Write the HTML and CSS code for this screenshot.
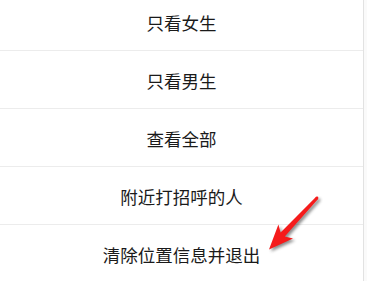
FILE: index.html
```
<!DOCTYPE html>
<html>
<head>
    <meta charset="UTF-8">
    <meta name="viewport" content="width=device-width, initial-scale=1.0">
    <link rel="stylesheet" href="styles.css">
</head>
<body>
    <div class="sheet">
        <ul class="menu">
            <li class="menu-item">只看女生</li>
            <li class="menu-item">只看男生</li>
            <li class="menu-item">查看全部</li>
            <li class="menu-item">附近打招呼的人</li>
            <li class="menu-item">清除位置信息并退出</li>
        </ul>
    </div>

    <!-- annotation arrow pointing at the last option -->
    <svg class="arrow" width="367" height="281" viewBox="0 0 367 281">
        <polygon fill="#f51b1b"
            points="315.9,197 318.1,199 284.8,236.4 293,238.6 269,249.5 278.4,224.4 280.6,232.4"/>
        <circle cx="317" cy="198" r="1.4" fill="#f51b1b"/>
    </svg>
</body>
</html>
```

FILE: styles.css
```
* {
    margin: 0;
    padding: 0;
    box-sizing: border-box;
}

body {
    width: 367px;
    height: 281px;
    overflow: hidden;
    background: #fafafa;
    font-family: "Noto Sans CJK SC", "Noto Sans", sans-serif;
    position: relative;
}

.sheet {
    display: flow-root;
    width: 364px;
    height: 100%;
    background: #fff;
    border-right: 1px solid #e2e2e2;
}

.menu {
    list-style: none;
    margin-top: -7px;
}

.menu-item {
    height: 58px;
    display: flex;
    justify-content: center;
    align-items: center;
    padding-top: 2px;
    border-bottom: 1px solid #ececec;
    font-size: 17.5px;
    color: #1a1a1a;
}

.arrow {
    position: absolute;
    top: 0;
    left: 0;
    filter: drop-shadow(2px 2px 1.5px rgba(0, 0, 0, 0.45));
}
```
